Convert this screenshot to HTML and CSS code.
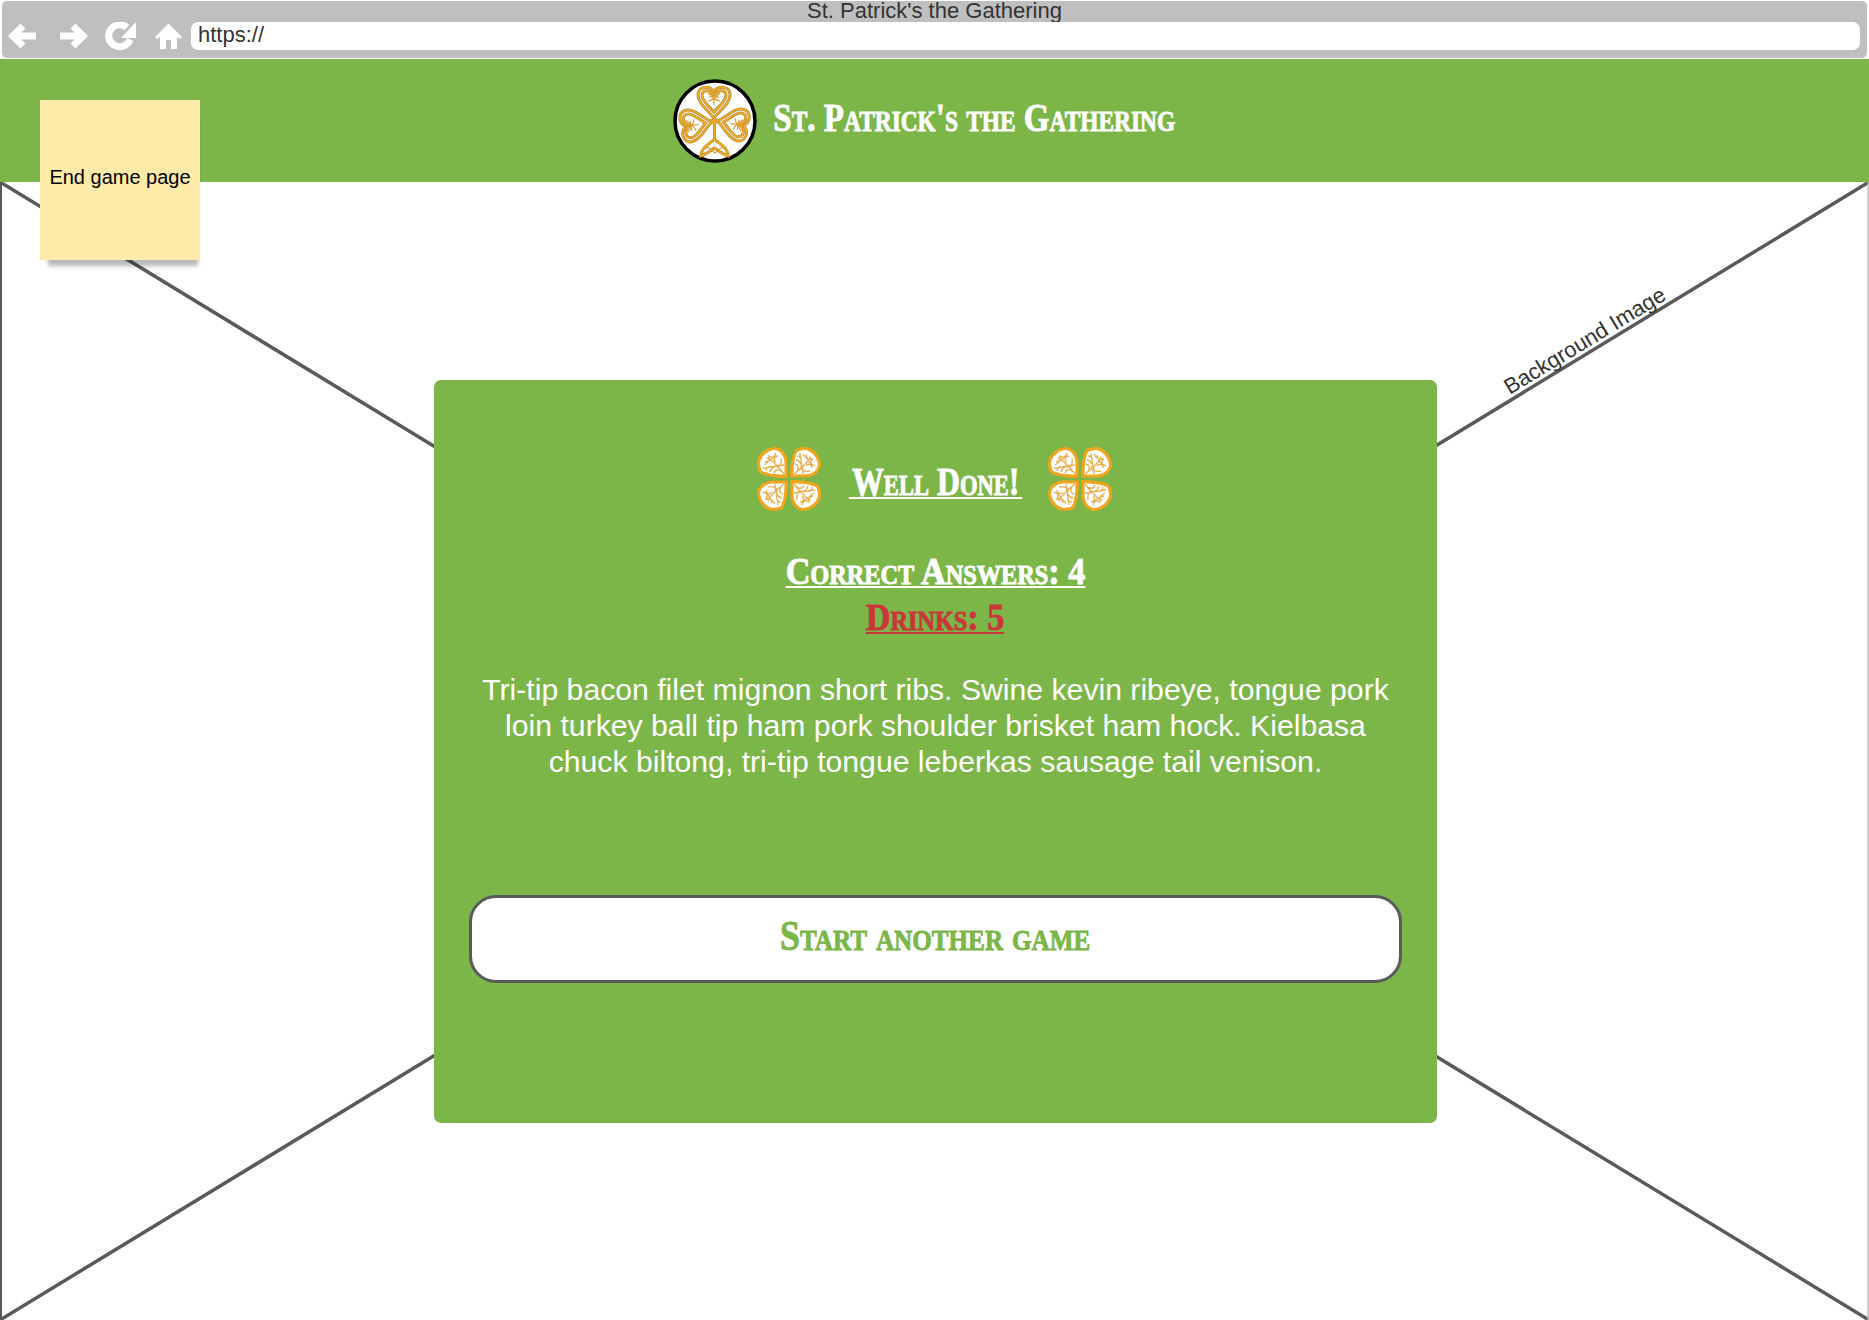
FILE: index.html
```html
<!DOCTYPE html>
<html lang="en">
<head>
<meta charset="utf-8">
<title>St. Patrick's the Gathering</title>
<link rel="stylesheet" href="styles.css">
</head>
<body>
<svg class="defs" width="0" height="0" aria-hidden="true">
  <defs>
    <g id="heart">
      <path class="k-out" d="M49 47C42 38 33 32 33 24C33 16 44 13 49 21C54 13 65 16 65 24C65 32 56 38 49 47Z"/>
      <path class="k-in" d="M49 47C42 38 33 32 33 24C33 16 44 13 49 21C54 13 65 16 65 24C65 32 56 38 49 47Z"/>
      <path class="k-out2" d="M49 41C44 35 37 30 37 24.500C37 19 45 17 49 25C53 17 61 19 61 24.500C61 30 54 35 49 41Z"/>
      <path class="k-in2" d="M49 41C44 35 37 30 37 24.500C37 19 45 17 49 25C53 17 61 19 61 24.500C61 30 54 35 49 41Z"/>
      <path class="k-in3" d="M43 22C47 26 51 30 55 30M55 22C51 26 47 30 43 30M49 20V34M44 26H54"/>
    </g>
    <g id="lobe">
      <path class="q-fill" d="M30.500 31V16C30.500 7 25 0 17 0C8 1 0 8 0 16C0 20 1 24 2.500 26C10 30 20 31 30.500 31Z"/>
      <path class="q-white" d="M27.500 27.500V16C27.500 9 23 3 17 3C10 4 3.500 10 3 16C3 19 4 22 5 24C11 26.500 18 27.500 27.500 27.500Z"/>
      <path class="q-knot" d="M27 27C22 20 18 17 14 13M8 15C13 14 18 10 19 6M6 21C12 21 16 18 20 20C23 21 25 16 24 11M13 25C14 19 20 18 27 18M12 8C13 12 11 16 7 18M17 26C18 22 22 22 24 24M21 9C17 9 16 13 19 15M10 12C12 9 15 9 16 11M9 24C9 21 11 19 14 20"/>
    </g>
    <symbol id="quatrefoil" viewBox="0 0 64 64">
      <use href="#lobe"/>
      <use href="#lobe" transform="rotate(90 32 32)"/>
      <use href="#lobe" transform="rotate(180 32 32)"/>
      <use href="#lobe" transform="rotate(270 32 32)"/>
    </symbol>
  </defs>
</svg>

<div class="page">
  <div class="browser">
    <div class="browser-title">St. Patrick's the Gathering</div>
    <div class="browser-bar">
      <svg class="nav-icons" width="186" height="34" viewBox="0 0 186 34" aria-hidden="true">
        <path class="nav-stroke" d="M36 14H15M23 4L13 14L23 24"/>
        <path class="nav-stroke" d="M60 14H81M73 4L83 14L73 24"/>
        <path class="nav-stroke" d="M127 5.500A11 11 0 1 0 130 17.500"/>
        <path class="nav-fill" d="M136 0V16H121Z"/>
        <path class="nav-fill" d="M168.500 1.500L155 15L157 17L160 15V27H166V18H171V27H177V15L180 17L182 15Z"/>
      </svg>
      <div class="url">https://</div>
    </div>
  </div>

  <header class="site-header">
    <svg class="logo" width="84" height="84" viewBox="8 8 84 84" aria-hidden="true">
      <circle class="logo-ring" cx="50" cy="50" r="40"/>
      <use href="#heart"/>
      <use href="#heart" transform="rotate(-100 49.500 50)"/>
      <use href="#heart" transform="rotate(100 49.500 50)"/>
      <path class="k-out" d="M49.500 46V68M46 48L49.500 53L53 48M36 85C36 76 45 73 49.500 68C54 73 63 76 63 85C57 83 54 80 49.500 77C45 80 42 83 36 85Z"/>
      <path class="k-in" d="M49.500 46V68M46 48L49.500 53L53 48M36 85C36 76 45 73 49.500 68C54 73 63 76 63 85C57 83 54 80 49.500 77C45 80 42 83 36 85Z"/>
      <path class="k-in3" d="M40 78C44 74 47 80 50 82C53 80 56 74 60 78"/>
    </svg>
    <div class="site-title"><span class="site-title-text">St. Patrick's the Gathering</span></div>
  </header>

  <div class="note">End game page</div>

  <main class="stage">
    <svg class="wire" viewBox="0 0 1869 1138" preserveAspectRatio="none" aria-hidden="true">
      <path class="wire-line" d="M0 0L1869 1138M1869 0L0 1138"/>
      <path class="wire-edge-left" d="M1 0V1138"/>
      <path class="wire-edge-right" d="M1868 0V1138"/>
    </svg>
    <div class="wire-label">Background Image</div>

    <section class="card">
      <div class="heading-row">
        <svg class="clover" aria-hidden="true"><use href="#quatrefoil"/></svg>
        <h1 class="heading"><span class="rule rule-heading">Well Done!</span></h1>
        <svg class="clover" aria-hidden="true"><use href="#quatrefoil"/></svg>
      </div>
      <div class="score"><span class="rule rule-score">Correct Answers: 4</span></div>
      <div class="score drinks"><span class="rule rule-score">Drinks: 5</span></div>
      <p class="blurb">Tri-tip bacon filet mignon short ribs. Swine kevin ribeye, tongue pork loin turkey ball tip ham pork shoulder brisket ham hock. Kielbasa chuck biltong, tri-tip tongue leberkas sausage tail venison.</p>
      <button class="start" type="button"><span class="start-label">Start another game</span></button>
    </section>
  </main>
</div>
</body>
</html>
```

FILE: styles.css
```css
* { box-sizing: border-box; }

html, body {
  margin: 0;
  padding: 0;
  background: #fff;
}

body {
  width: 1869px;
  height: 1320px;
  overflow: hidden;
  font-family: "Liberation Sans", Arial, sans-serif;
}

.defs { position: absolute; }

.page {
  position: relative;
  display: flex;
  flex-direction: column;
  width: 1869px;
  height: 1320px;
}

/* browser chrome */
.browser {
  flex: 0 0 59px;
  padding: 1px 2px;
}

.browser-title {
  height: 21px;
  background: #bfbfbf;
  border-radius: 5px 5px 0 0;
  color: #333;
  font-size: 22px;
  line-height: 20px;
  text-align: center;
}

.browser-bar {
  display: flex;
  align-items: flex-start;
  height: 36px;
  background: #bfbfbf;
  border-radius: 0 0 5px 5px;
}

.nav-icons {
  flex: 0 0 186px;
  margin-left: -2px;
  margin-right: 5px;
}

.nav-stroke {
  fill: none;
  stroke: #fff;
  stroke-width: 7;
}

.nav-fill { fill: #fff; }

.url {
  flex: 1;
  height: 28px;
  margin-right: 7px;
  padding-left: 7px;
  background: #fff;
  border-radius: 7px;
  color: #333;
  font-size: 22px;
  line-height: 26px;
}

/* header */
.site-header {
  flex: 0 0 123px;
  display: flex;
  align-items: center;
  justify-content: center;
  gap: 17px;
  padding-right: 21px;
  background: #7cb649;
}

.logo { flex: none; }

.logo-ring {
  fill: #fff;
  stroke: #000;
  stroke-width: 3.500;
}

.k-out, .k-out2 {
  fill: none;
  stroke: #a08a4f;
  stroke-width: 3;
}

.k-in, .k-in2 {
  fill: none;
  stroke: #f0a820;
  stroke-width: 2;
}

.k-in3 {
  fill: none;
  stroke: #dc9c28;
  stroke-width: 1.200;
}

.site-title-text, .rule, .start-label {
  font-family: "Liberation Serif", serif;
  font-weight: 700;
  font-variant: small-caps;
  white-space: nowrap;
  -webkit-text-stroke: 0.9px currentColor;
}

.site-title {
  display: flex;
  justify-content: center;
  flex: 0 0 402px;
  min-width: 0;
  width: 402px;
  margin-bottom: 7px;
  color: #fff;
}

.site-title-text {
  flex: none;
  font-size: 41px;
  line-height: 44px;
  transform: scaleX(0.806);
}

/* sticky note */
.note {
  position: absolute;
  left: 40px;
  top: 100px;
  z-index: 3;
  display: flex;
  align-items: center;
  justify-content: center;
  width: 160px;
  height: 160px;
  padding-bottom: 5px;
  background: #ffeaa7;
  box-shadow: 3px 11px 4px -5px rgba(0, 0, 0, 0.28);
  color: #000;
  font-size: 20px;
}

/* background image placeholder */
.stage {
  position: relative;
  flex: 1;
  display: flex;
  align-items: center;
  justify-content: center;
  padding-left: 2px;
}

.wire {
  position: absolute;
  left: 0;
  top: 0;
  width: 1869px;
  height: 1138px;
}

.wire-line {
  fill: none;
  stroke: #5a5a5a;
  stroke-width: 3.500;
}

.wire-edge-left {
  fill: none;
  stroke: #5a5a5a;
  stroke-width: 2;
}

.wire-edge-right {
  fill: none;
  stroke: #bdbdbd;
  stroke-width: 1.500;
}

.wire-label {
  position: absolute;
  left: 1487px;
  top: 145px;
  width: 196px;
  color: #333;
  font-size: 22px;
  line-height: 28px;
  text-align: center;
  white-space: nowrap;
  transform: rotate(-31.300deg);
}

/* card */
.card {
  position: relative;
  display: flex;
  flex-direction: column;
  align-items: center;
  width: 1003px;
  height: 743px;
  padding: 67px 35px 0;
  background: #7cb649;
  border-radius: 7px;
  color: #fff;
}

.heading-row {
  display: flex;
  align-items: center;
  gap: 26px;
  height: 64px;
  margin-bottom: 45px;
  padding-right: 2px;
}

.clover {
  flex: none;
  width: 64px;
  height: 64px;
}

.q-fill { fill: #f0a51e; }
.q-white { fill: #fff; }

.q-knot {
  fill: none;
  stroke: #eaae4e;
  stroke-width: 1.300;
}

.heading {
  display: flex;
  justify-content: center;
  flex: 0 0 173px;
  min-width: 0;
  width: 173px;
  margin: 0 0 0 2px;
  font-size: inherit;
  font-weight: inherit;
}

.rule {
  display: inline-block;
  flex: none;
  border-bottom: 2px solid currentColor;
}

.rule-heading {
  padding: 6px 4px 0;
  font-size: 41px;
  line-height: 32px;
  transform: scaleX(0.777);
}

.rule-score {
  font-size: 38px;
  line-height: 30px;
  transform: scaleX(0.9);
}

.score {
  display: flex;
  align-items: flex-start;
  justify-content: center;
  height: 46px;
}

.drinks { color: #c8383a; }

.blurb {
  width: 932px;
  margin: 24px 0 0;
  font-size: 30.200px;
  line-height: 36px;
  text-align: center;
}

.start {
  display: flex;
  align-items: center;
  justify-content: center;
  flex: none;
  width: 933px;
  height: 88px;
  margin-top: 115px;
  padding: 0 0 6px;
  background: #fff;
  border: 3px solid #5a5a5a;
  border-radius: 27px;
  color: #7cb649;
}

.start-label {
  flex: none;
  font-size: 42.700px;
  transform: scaleX(0.838);
}
```
